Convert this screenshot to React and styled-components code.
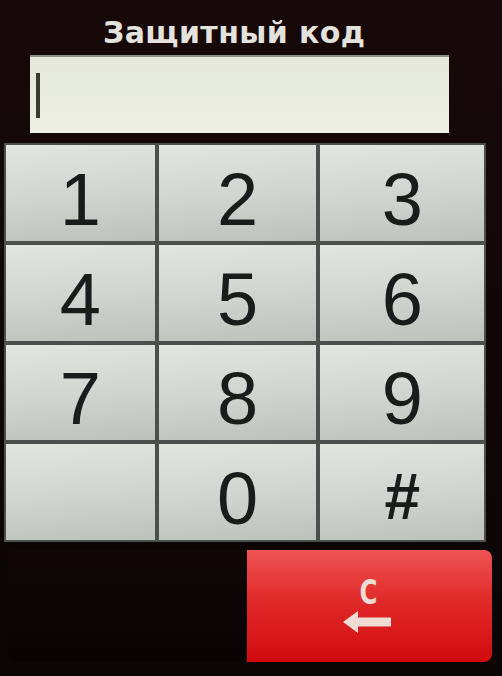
import styled, { createGlobalStyle } from "styled-components";

const GlobalStyle = createGlobalStyle`
  html, body {
    margin: 0;
    padding: 0;
    background: #0d0606;
  }
  body {
    font-family: "Liberation Sans", Arial, sans-serif;
  }
`;

const keys = ["1", "2", "3", "4", "5", "6", "7", "8", "9", "", "0", "#"];

export default function App() {
  return (
    <Screen>
      <GlobalStyle />
      <Title>Защитный код</Title>
      <CodeField>
        <Cursor />
      </CodeField>
      <Keypad>
        {keys.map((k, i) => (
          <Key key={i} $small={k === "#"}>
            {k}
          </Key>
        ))}
      </Keypad>
      <ActionRow>
        <BlankButton />
        <ClearButton>
          <ClearLabel>C</ClearLabel>
          <BackArrow viewBox="0 0 50 24">
            <path d="M1 12 L16 1 L16 7.5 L49 7.5 L49 16.5 L16 16.5 L16 23 Z" fill="#eedbd4" />
          </BackArrow>
        </ClearButton>
      </ActionRow>
    </Screen>
  );
}

const Screen = styled.div`
  width: 502px;
  height: 676px;
  overflow: hidden;
  background: linear-gradient(#180909, #0b0505);
  display: flex;
  flex-direction: column;
  align-items: flex-start;
`;

const Title = styled.div`
  align-self: stretch;
  padding-left: 103px;
  height: 55px;
  line-height: 66px;
  font-family: "DejaVu Sans", sans-serif;
  font-weight: bold;
  font-size: 30px;
  letter-spacing: 0.4px;
  color: #e4e2dc;
  box-sizing: border-box;
`;

const CodeField = styled.div`
  margin-left: 30px;
  width: 419px;
  height: 78px;
  background: linear-gradient(#e4e7da, #eef0e6);
  border-top: 2px solid #8e8e86;
  box-sizing: border-box;
  display: flex;
  align-items: center;
  padding-left: 6px;
`;

const Cursor = styled.div`
  width: 4px;
  height: 45px;
  background: #3b3b36;
`;

const Keypad = styled.div`
  margin-top: 10px;
  margin-left: 4px;
  width: 482px;
  height: 399px;
  display: grid;
  grid-template-columns: 152fr 161fr 167fr;
  grid-template-rows: repeat(4, 1fr);
  gap: 4px;
  padding: 2px;
  box-sizing: border-box;
  background: #4b504e;
`;

const Key = styled.div`
  background: linear-gradient(175deg, #e2e6e1 0%, #cfd4cf 55%, #bcc1bc 100%);
  display: flex;
  justify-content: center;
  align-items: center;
  padding-top: ${({ $small }) => ($small ? "10px" : "14px")};
  font-size: ${({ $small }) => ($small ? "64px" : "74px")};
  font-weight: ${({ $small }) => ($small ? "bold" : "normal")};
  color: #1a1c1b;
  box-sizing: border-box;
  line-height: 1;
`;

const ActionRow = styled.div`
  margin-top: 8px;
  margin-left: 8px;
  width: 484px;
  height: 112px;
  display: flex;
  gap: 2px;
`;

const BlankButton = styled.div`
  width: 237px;
  background: linear-gradient(#120707, #060303);
  border-radius: 6px 0 0 6px;
`;

const ClearButton = styled.div`
  flex: 1;
  background: linear-gradient(#ef5452 0%, #e02a2a 45%, #d20a0c 100%);
  border-radius: 0 8px 8px 0;
  display: flex;
  flex-direction: column;
  align-items: center;
  padding-top: 26px;
  padding-right: 6px;
  box-sizing: border-box;
`;

const ClearLabel = styled.div`
  font-family: "DejaVu Sans", sans-serif;
  font-weight: bold;
  font-size: 34px;
  line-height: 32px;
  color: #eedbd4;
  margin-left: 4px;
  transform: scaleX(0.72);
`;

const BackArrow = styled.svg`
  width: 50px;
  height: 24px;
  margin-top: 2px;
`;
